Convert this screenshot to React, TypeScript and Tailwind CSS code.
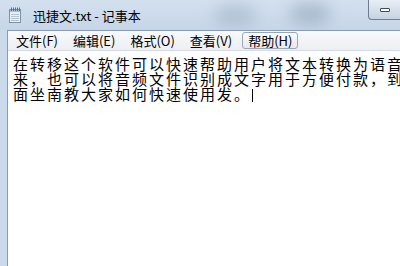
const lines = [
  "在转移这个软件可以快速帮助用户将文本转换为语音",
  "来，也可以将音频文件识别成文字用于方便付款，到",
  "面坐南教大家如何快速使用发。",
];

const menus = ["文件(F)", "编辑(E)", "格式(O)", "查看(V)"];

function NotepadIcon() {
  return (
    <svg width="15" height="16" viewBox="0 0 15 16">
      <rect x="1.5" y="2.5" width="11" height="13" fill="#e9eef4" stroke="#7f93a8" />
      <rect x="2" y="3" width="10" height="2" fill="#9fc0de" />
      {[3, 5, 7, 9, 11].map((x) => (
        <rect key={x} x={x} y="0.5" width="1" height="3.5" fill="#5f6f80" />
      ))}
      {[7, 9, 11, 13].map((y) => (
        <line key={y} x1="3" x2="11" y1={y + 0.5} y2={y + 0.5} stroke="#b8c6d4" />
      ))}
    </svg>
  );
}

export default function App() {
  return (
    <div className="w-[400px] h-[266px] overflow-hidden flex flex-col bg-[#cbdaeb] font-['Noto_Sans_CJK_SC','Noto_Sans',sans-serif]">
      {/* title bar */}
      <div className="relative h-[30px] shrink-0 flex items-center pl-[8px] bg-gradient-to-b from-[#d3e0ee] to-[#c6d6e8] overflow-hidden">
        <div className="absolute left-[215px] top-[6px] w-[40px] h-[20px] rounded-full bg-[#9fb0c2] blur-[8px] opacity-60" />
        <div className="absolute left-[290px] top-[4px] w-[40px] h-[20px] rounded-full bg-[#8fa2b6] blur-[8px] opacity-60" />
        <NotepadIcon />
        <span className="relative ml-[10px] text-[13px] leading-none text-black">迅捷文.txt - 记事本</span>
        <div className="absolute right-0 top-0 w-[32px] h-[20px] rounded-bl-[4px] border-l border-b border-[#6d7d8f] bg-gradient-to-b from-[#e8eef5] to-[#c5d3e2] flex items-center justify-center">
          <div className="w-[10px] h-[4px] rounded-[1px] border border-[#404a55] bg-white" />
        </div>
      </div>
      {/* body */}
      <div className="flex-1 flex pl-[7px]">
        <div className="flex-1 flex flex-col border-l border-t border-[#8a9bb0]">
          <div className="h-[20px] shrink-0 flex items-center pl-[8px] bg-gradient-to-b from-[#f7f9fb] to-[#eceff3] border-b border-[#d5dbe2] text-[13px] text-black">
            {menus.map((m, i) => (
              <span key={m} className={i === 3 ? "mr-[10px]" : "mr-[15px]"}>
                {m}
              </span>
            ))}
            <span className="h-[17px] px-[5px] flex items-center rounded-[3px] border border-[#9aa6b3] bg-gradient-to-b from-[#fafbfc] to-[#e6eaee]">
              帮助(H)
            </span>
          </div>
          <div className="flex-1 bg-white pt-[5px] pl-[5px] text-[15px] leading-[15px] tracking-[2px] text-black">
            {lines.map((l, i) => (
              <div key={i} className="whitespace-nowrap">
                {l}
                {i === 2 && <span className="inline-block align-middle ml-[1px] w-px h-[13px] bg-black" />}
              </div>
            ))}
          </div>
        </div>
      </div>
    </div>
  );
}
